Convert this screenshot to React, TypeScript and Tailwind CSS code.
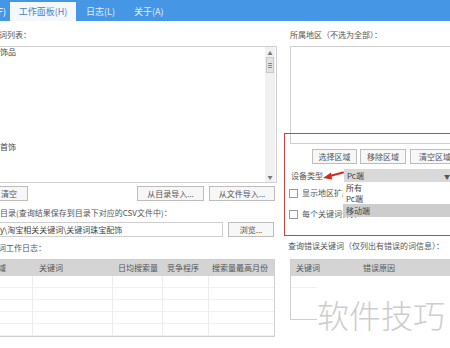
import React from "react";

const keywords = ["珠宝饰品", "手链", "耳钉", "戒指", "项链", "吊坠", "手镯", "胸针", "发饰", "时尚首饰"];

const logCols = [
  { label: "地域", w: "w-[52px]", pl: "pl-[9px]" },
  { label: "关键词", w: "w-[80px]", pl: "pl-[6px]" },
  { label: "日均搜索量", w: "w-[50px]", pl: "pl-[5px]" },
  { label: "竞争程序", w: "w-[46px]", pl: "pl-[4px]" },
  { label: "搜索量最高月份", w: "w-[66px]", pl: "pl-[3px]" },
];

function Btn({ children, className = "" }: { children: React.ReactNode; className?: string }) {
  return (
    <div
      className={`h-[15px] border border-[#bdbdbd] bg-[#f7f7f7] flex items-center justify-center text-[8px] text-[#555] leading-none ${className}`}
    >
      {children}
    </div>
  );
}

function Label({ children, className = "" }: { children: React.ReactNode; className?: string }) {
  return <div className={`text-[8px] leading-[12px] text-[#555] whitespace-nowrap ${className}`}>{children}</div>;
}

export default function App() {
  return (
    <div
      className="relative w-[450px] h-[348px] overflow-hidden bg-white flex flex-col"
      style={{ fontFamily: '"Noto Sans CJK SC", "Noto Sans", sans-serif' }}
    >
      {/* Menu tabs */}
      <div className="h-[21px] shrink-0 bg-[#4597e6] flex items-end">
        <div className="w-[6px] h-[19px] overflow-hidden flex justify-end">
          <span className="text-[9px] leading-[19px] text-white whitespace-nowrap">(F)</span>
        </div>
        <div className="ml-[4px] w-[66px] h-[19px] bg-[#f4f7fb] flex items-center justify-center text-[9px] text-[#4a84c4]">
          工作面板(H)
        </div>
        <span className="ml-[10px] h-[19px] text-[9px] leading-[19px] text-[#e3eefb]">日志(L)</span>
        <span className="ml-[19px] h-[19px] text-[9px] leading-[19px] text-[#e3eefb]">关于(A)</span>
      </div>

      <div className="flex flex-1">
        {/* Left column */}
        <div className="ml-[-20px] w-[297px] shrink-0 flex flex-col">
          <div className="h-[25px] flex items-center pt-[3px]">
            <Label className="pl-[3px]">关键词列表：</Label>
          </div>
          <div className="h-[137px] border border-[#cfcfcf] flex">
            <div className="flex-1 pl-[3px]">
              {keywords.map((k) => (
                <div key={k} className="text-[8px] leading-[10.5px] text-[#444] whitespace-nowrap">
                  {k}
                </div>
              ))}
            </div>
            <div className="w-[10px] mr-[1px] bg-[#f1f1f1] flex flex-col items-center">
              <span className="text-[5px] leading-[8px] text-[#777] mt-[2px]">▲</span>
              <div className="w-[8px] h-[16px] bg-[#e2e2e2] border border-[#c9c9c9] flex flex-col items-center justify-center gap-[1px]">
                <div className="w-[4px] h-px bg-[#888]" />
                <div className="w-[4px] h-px bg-[#888]" />
                <div className="w-[4px] h-px bg-[#888]" />
              </div>
              <div className="flex-1" />
              <span className="text-[5px] leading-[8px] text-[#777] mb-[1px]">▼</span>
            </div>
          </div>
          <div className="mt-[3px] flex">
            <Btn className="ml-[10px] w-[38px]">清空</Btn>
            <div className="flex-1" />
            <Btn className="w-[67px]">从目录导入...</Btn>
            <Btn className="ml-[5px] mr-[2px] w-[66px]">从文件导入...</Btn>
          </div>
          <Label className="mt-[6px] pl-[4px]">输出目录(查询结果保存到目录下对应的CSV文件中)：</Label>
          <div className="mt-[3px] flex">
            <div className="w-[243px] h-[15px] border border-[#cfcfcf] flex items-center pl-[2px] text-[8px] text-[#444] whitespace-nowrap overflow-hidden">
              D:\zly\淘宝相关关键词\关键词珠宝配饰
            </div>
            <Btn className="ml-[5px] w-[46px]">浏览...</Btn>
          </div>
          <Label className="mt-[5px] pl-[2px]">关键词工作日志：</Label>
          <div className="mt-[5px] w-[295px] border border-[#cfcfcf]">
            <div className="h-[16px] bg-[#d4d4d4] flex">
              {logCols.map((c) => (
                <div key={c.label} className={`${c.w} ${c.pl} shrink-0 text-[8px] leading-[16px] text-[#555] whitespace-nowrap`}>
                  {c.label}
                </div>
              ))}
            </div>
            <div className="h-[60px] flex flex-col">
              {[0, 1, 2, 3, 4].map((r) => (
                <div key={r} className="h-[12px] flex border-b border-[#f0f0f0]">
                  {logCols.map((c, i) => (
                    <div key={c.label} className={`${c.w} shrink-0 ${i < 4 ? "border-r border-[#ececec]" : ""}`} />
                  ))}
                </div>
              ))}
            </div>
          </div>
        </div>

        {/* Right column */}
        <div className="ml-[11px] w-[180px] shrink-0 flex flex-col">
          <div className="h-[25px] flex items-center pt-[3px]">
            <Label className="pl-[2px]">所属地区（不选为全部）：</Label>
          </div>
          <div className="ml-[2px] h-[98px] border border-[#cfcfcf]" />
          <div className="mt-[5px] ml-[24px] flex gap-[3px]">
            <Btn className="w-[45px]">选择区域</Btn>
            <Btn className="w-[46px]">移除区域</Btn>
            <Btn className="ml-[1px] w-[50px]">清空区域</Btn>
          </div>
          <div className="mt-[5px] h-[14px] flex items-center">
            <Label className="pl-[3px]">设备类型</Label>
            <div className="ml-[21px] w-[120px] h-[14px] bg-[#d9d9d9] flex items-center pl-[3px] text-[8px] text-[#444]">
              Pc端
              <span className="ml-auto mr-[14px] text-[6px] text-[#555]">▼</span>
            </div>
          </div>
          <div className="mt-[4px] h-[12px] flex items-center">
            <div className="ml-[1px] w-[9px] h-[9px] border border-[#9a9a9a] bg-white" />
            <Label className="ml-[4px]">显示地区扩展信息</Label>
          </div>
          <div className="mt-[9px] h-[12px] flex items-center">
            <div className="ml-[1px] w-[9px] h-[9px] border border-[#9a9a9a] bg-white" />
            <Label className="ml-[4px]">每个关键词计算</Label>
          </div>
          <Label className="mt-[20px]">查询错误关键词（仅列出有错误的词信息）：</Label>
          <div className="mt-[7px] ml-[2px] h-[61px] border border-[#cfcfcf] border-r-0">
            <div className="h-[16px] bg-[#d4d4d4] flex text-[8px] leading-[16px] text-[#555]">
              <span className="pl-[5px] w-[72px]">关键词</span>
              <span>错误原因</span>
            </div>
            <div className="h-[12px] w-[26px] border-b border-[#f0f0f0]" />
          </div>
        </div>
      </div>

      {/* Red annotation box */}
      <div className="absolute left-[284px] top-[133px] w-[180px] h-[103px] border-[1.5px] border-[#c8453e]" />

      {/* Red arrow */}
      <svg className="absolute left-[322px] top-[170px]" width="22" height="11" viewBox="0 0 22 11">
        <path d="M21 2.5 L8 6" stroke="#d22a22" strokeWidth="2" strokeLinecap="round" />
        <polygon points="1,8 9,2.5 10,9.5" fill="#d22a22" />
      </svg>

      {/* Open dropdown list */}
      <div className="absolute left-[343px] top-[182px] w-[120px] bg-white flex flex-col text-[8px] text-[#444]">
        <div className="h-[11px] leading-[11px] pl-[3px]">所有</div>
        <div className="h-[11px] leading-[11px] pl-[3px]">Pc端</div>
        <div className="h-[13px] leading-[13px] pl-[3px] bg-[#cdcdcd]">移动端</div>
      </div>

      {/* Watermark */}
      <div className="absolute left-[317px] top-[292px] w-[140px] bg-white text-[32px] leading-[44px] text-[#cdcdcd] font-light whitespace-nowrap">
        软件技巧
      </div>
    </div>
  );
}
